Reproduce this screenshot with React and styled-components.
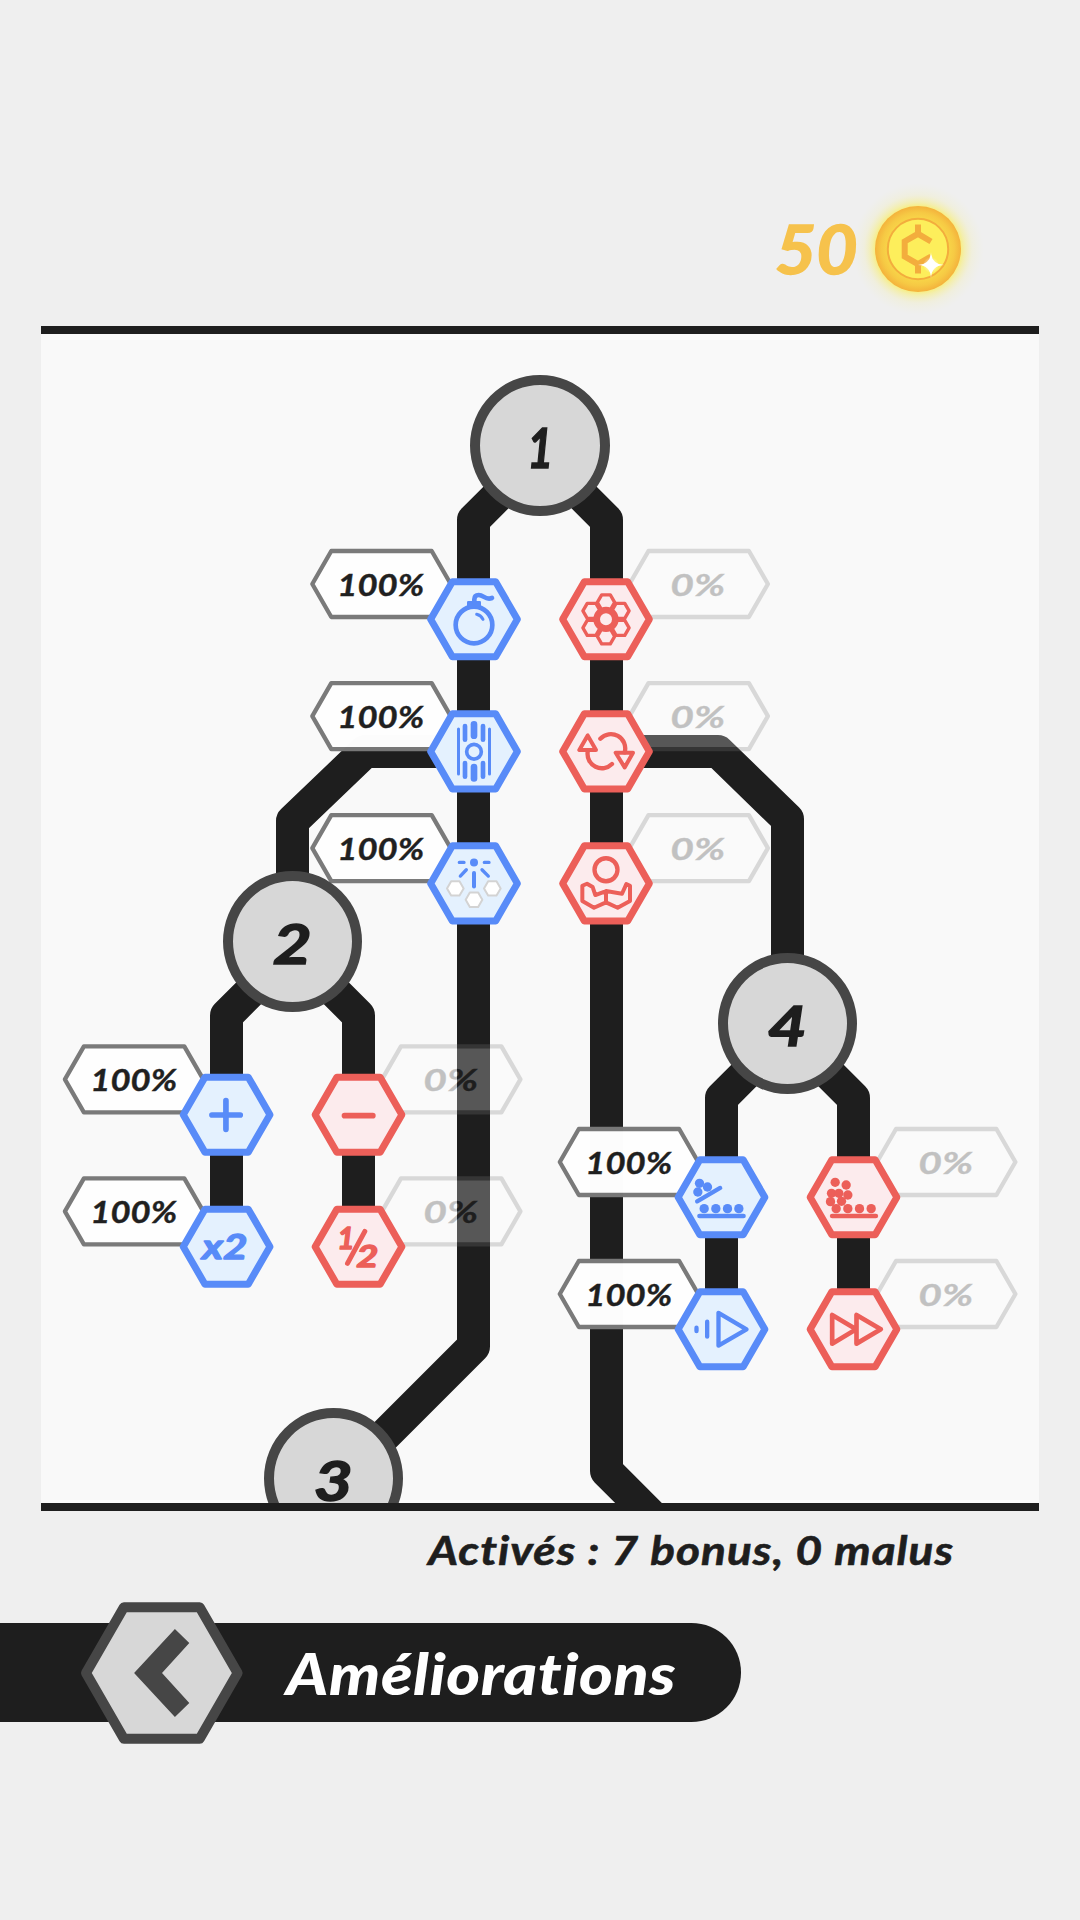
import React from "react";
import styled, { createGlobalStyle } from "styled-components";

const INK = "#1e1e1e";
const TONES = {
  bonus: { line: "#588bf8", fill: "#e4f1fe" },
  malus: { line: "#ec5f59", fill: "#fcebed" },
};

const GlobalStyle = createGlobalStyle`
  body { margin: 0; background: #efefef; }
  * { box-sizing: border-box; }
`;

const Screen = styled.main`
  width: 1080px;
  height: 1920px;
  display: flex;
  flex-direction: column;
  background: #efefef;
  color: ${INK};
  font-family: Lato, "Open Sans", sans-serif;
  font-style: italic;
  font-weight: 700;
  overflow: hidden;
`;

const Wallet = styled.header`
  height: 326px;
  padding: 179px 92px 0 0;
  display: flex;
  justify-content: flex-end;
  align-items: flex-start;
`;

const Amount = styled.span`
  height: 140px;
  line-height: 140px;
  font-size: 66px;
  color: #f6c24c;
  transform: scaleX(1.08);
  transform-origin: right;
  -webkit-text-stroke: 1.5px #f6c24c;
`;

const CoinArt = styled.svg`
  width: 140px;
  height: 140px;
  margin-left: -10px;
`;

const Board = styled.section`
  position: relative;
  flex: none;
  width: 998px;
  height: 1185px;
  margin: 0 41px;
  border: solid ${INK};
  border-width: 8px 0;
  background: #f9f9f9;
  overflow: hidden;
`;

const Canvas = styled.div`
  position: absolute;
  left: -41px;
  top: -334px;
  width: 1080px;
  height: 1920px;
`;

const Links = styled.svg`
  position: absolute;
  inset: 0;
  width: 1080px;
  height: 1920px;
  fill: none;
  stroke: ${INK};
  stroke-width: 33;
  stroke-linejoin: round;
`;

const Hub = styled.div`
  position: absolute;
  left: ${(p) => p.$left}px;
  top: ${(p) => p.$top}px;
  width: ${(p) => p.$width}px;
  height: 141px;
  display: flex;
  align-items: center;
  justify-content: center;
  border: 10px solid #464646;
  border-radius: 50%;
  background: #d7d7d7;
`;

const HubLabel = styled.span`
  font-size: 56px;
  line-height: 1;
  padding-top: 2px;
  transform: scaleX(${(p) => (p.$narrow ? 0.8 : 1.2)});
  -webkit-text-stroke: 1.5px ${INK};
`;

const Tile = styled.svg`
  position: absolute;
  left: ${(p) => p.$x - 48}px;
  top: ${(p) => p.$y - 43}px;
  width: 98px;
  height: 88px;
  stroke-linecap: round;
  stroke-linejoin: round;
`;

const IconText = styled.text`
  font: italic 700 ${(p) => p.$size}px Lato, sans-serif;
  fill: currentColor;
  stroke: currentColor;
  stroke-width: 4;
`;

const Badge = styled.div`
  position: absolute;
  left: ${(p) => p.$x - 72}px;
  top: ${(p) => p.$y - 36}px;
  width: 144px;
  height: 72px;
  display: grid;
  place-items: center;
  opacity: ${(p) => (p.$dim ? 0.25 : 0.99)};
`;

const BadgeShape = styled.svg`
  grid-area: 1 / 1;
  width: 144px;
  height: 72px;
  overflow: visible;
`;

const BadgeValue = styled.span`
  grid-area: 1 / 1;
  z-index: 1;
  font-size: 31px;
  line-height: 72px;
  white-space: nowrap;
  transform: scaleX(${(p) => (p.$short ? 1.32 : 1.12)});
  -webkit-text-stroke: 0.4px ${INK};
`;

const Summary = styled.p`
  margin: 0;
  height: 94px;
  padding: 14px 126px 0 0;
  text-align: right;
  font-size: 40px;
  line-height: 50px;
`;

const SummaryText = styled.span`
  display: inline-block;
  transform: scaleX(1.148);
  transform-origin: right;
  letter-spacing: 0.9px;
  -webkit-text-stroke: 0.6px ${INK};
`;

const Footer = styled.footer`
  height: 141px;
  margin-top: -3px;
  display: flex;
  align-items: center;
`;

const TitleBar = styled.div`
  width: 741px;
  height: 99px;
  display: flex;
  align-items: center;
  gap: 42px;
  padding-left: 79px;
  border-radius: 0 49.5px 49.5px 0;
  background: ${INK};
`;

const BackButton = styled.button`
  flex: none;
  width: 165px;
  height: 144px;
  padding: 0;
  border: 0;
  background: none;
`;

const Title = styled.h1`
  margin: 0;
  font-size: 57px;
  line-height: 70px;
  font-weight: 900;
  letter-spacing: 0.5px;
  color: #fff;
  transform: scaleX(1.132);
  transform-origin: left;
`;

const hex = (cx, cy, r) =>
  [0, 60, 120, 180, 240, 300]
    .map((a) => {
      const t = (a * Math.PI) / 180;
      return `${(cx + r * Math.cos(t)).toFixed(2)},${(cy + r * Math.sin(t)).toFixed(2)}`;
    })
    .join(" ");

/* Icons are drawn around 0,0 in thirds of a pixel. */
const stroke = (w) => ({ fill: "none", stroke: "currentColor", strokeWidth: w });
const Balls = ({ at }) =>
  at.map(([x, y]) => <circle key={`${x},${y}`} cx={x} cy={y} r="14" fill="currentColor" />);

const ICONS = {
  bomb: (
    <>
      <circle cy="17" r="55" {...stroke(14)} />
      <rect x="-21" y="-55" width="42" height="18" rx="4" fill="currentColor" />
      <path d="M1-52V-60Q1-73 14-73C30-73 34-56 54-64" {...stroke(14)} />
      <path d="M8-15Q21-12 27 0" {...stroke(9)} />
    </>
  ),
  comb: (
    <>
      {[30, 90, 150, 210, 270, 330].map((a) => {
        const t = (a * Math.PI) / 180;
        return <polygon key={a} points={hex(50 * Math.cos(t), 51 * Math.sin(t), 26)} {...stroke(10)} />;
      })}
      <circle r="28" fill="#fcebed" stroke="currentColor" strokeWidth="20" />
    </>
  ),
  beam: (
    <g fill="currentColor">
      <circle cy="1" r="22" {...stroke(11)} />
      <rect x="-10" y="-91" width="20" height="54" rx="10" />
      <rect x="-10" y="37" width="20" height="54" rx="10" />
      {[-34, 20].map((x) => (
        <g key={x}>
          <rect x={x} y="-83" width="14" height="55" rx="7" />
          <rect x={x} y="28" width="14" height="55" rx="7" />
        </g>
      ))}
      <rect x="-51" y="-72" width="9" height="144" rx="4.5" />
      <rect x="42" y="-72" width="9" height="144" rx="4.5" />
    </g>
  ),
  cycle: (
    <>
      <path d="M-55-48L-80-4H-30ZM29 4H81L56 48Z" {...stroke(12)} />
      <path d="M-17-38A43 43 0 0 1 56 3M-55 2A43 43 0 0 0 18 38" {...stroke(13)} />
    </>
  ),
  spark: (
    <>
      <circle cy="-63" r="12" fill="currentColor" />
      <path d="M-44-63H-30M31-63H45M-23-41L-41-22M24-41L43-22" {...stroke(10)} />
      <path d="M0-31V9" {...stroke(12)} />
      {[[-56, 15], [55, 15], [0, 49]].map(([x, y]) => (
        <polygon key={x} points={hex(x, y, 25)} fill="#fff" stroke="#d3d3d3" strokeWidth="6" />
      ))}
    </>
  ),
  hands: (
    <>
      <circle cy="-41" r="34.5" {...stroke(13)} />
      <path
        d="M-71 7L-57 1L-40 11L-32 35L0 23L48 31L61 2L72 7V53L35 73L0 57L-36 73L-71 53ZM0 23V57"
        {...stroke(12)}
      />
    </>
  ),
  plus: <path d="M-44 1H41M-2-42V44" {...stroke(17)} />,
  minus: <path d="M-42 3H43" {...stroke(17)} />,
  double: (
    <g transform="translate(-5 38) scale(1.22 1)">
      <IconText textAnchor="middle" $size={104}>
        x2
      </IconText>
    </g>
  ),
  half: (
    <>
      <IconText x="-64" y="8" $size={90}>
        1
      </IconText>
      <path d="M19-46L-33 50" {...stroke(15)} />
      <g transform="translate(-7 61) scale(1.25 1)">
        <IconText $size={92}>2</IconText>
      </g>
    </>
  ),
  sorted: (
    <>
      <Balls at={[[-66, -42], [-42, -31], [-71, -16], [-52, 34], [-17, 34], [18, 34], [52, 34]]} />
      <path d="M-73 12L-4-28" {...stroke(13)} />
      <path d="M-66 56H66" {...stroke(14)} />
    </>
  ),
  piled: (
    <>
      <Balls
        at={[[-55, -45], [-22, -37], [-66, -12], [-44, -12], [-17, -7], [-69, 13], [-36, 12], [-52, 34], [-17, 34], [18, 34], [53, 34]]}
      />
      <path d="M-64 56H67" {...stroke(14)} />
    </>
  ),
  slow: <path d="M-75-5V5M-43-23V22M-9-49V49L75 0Z" {...stroke(13)} />,
  fast: <path d="M-64-43V43L8 0ZM9-43V43L82 0Z" {...stroke(14)} />,
};

function Perk({ x, y, icon, malus }) {
  const tone = malus ? TONES.malus : TONES.bonus;
  const tx = Math.floor(x);
  const ty = Math.floor(y);
  const bx = x + (malus ? 92.7 : -92.5);
  const by = y - 35.3;
  const badgeX = Math.floor(bx);
  const badgeY = Math.floor(by);
  return (
    <>
      <Badge $x={badgeX} $y={badgeY} $dim={malus}>
        <BadgeShape viewBox={`${-72 - (bx - badgeX)} ${-36 - (by - badgeY)} 144 72`}>
          <polygon
            points="-69.2,0 -50.2,-33 50.2,-33 69.2,0 50.2,33 -50.2,33"
            fill="#fff"
            stroke="#797979"
            strokeWidth="4.3"
            strokeLinejoin="round"
          />
        </BadgeShape>
        <BadgeValue $short={malus}>{malus ? "0%" : "100%"}</BadgeValue>
      </Badge>
      <Tile
        $x={tx}
        $y={ty}
        viewBox={`${-144 - 3 * (x - tx)} ${-129 - 3 * (y - ty)} 294 264`}
        color={tone.line}
      >
        <polygon points={hex(0, 0, 130)} fill={tone.fill} stroke="currentColor" strokeWidth="21" />
        {ICONS[icon]}
      </Tile>
    </>
  );
}

const PERKS = [
  { x: 474, y: 619.3, icon: "bomb" },
  { x: 606, y: 619.3, icon: "comb", malus: true },
  { x: 474, y: 751.4, icon: "beam" },
  { x: 606, y: 751.4, icon: "cycle", malus: true },
  { x: 474, y: 883.4, icon: "spark" },
  { x: 606, y: 883.4, icon: "hands", malus: true },
  { x: 226.6, y: 1114.7, icon: "plus" },
  { x: 358.5, y: 1114.7, icon: "minus", malus: true },
  { x: 226.6, y: 1246.7, icon: "double" },
  { x: 358.5, y: 1246.7, icon: "half", malus: true },
  { x: 721.5, y: 1197.3, icon: "sorted" },
  { x: 853.5, y: 1197.3, icon: "piled", malus: true },
  { x: 721.5, y: 1329.3, icon: "slow" },
  { x: 853.5, y: 1329.3, icon: "fast", malus: true },
];

const HUBS = [
  { left: 470, top: 375, width: 140, label: "1" },
  { left: 223, top: 871, width: 139, label: "2" },
  { left: 264, top: 1408, width: 139, label: "3" },
  { left: 718, top: 953, width: 139, label: "4" },
];

function Coin() {
  return (
    <CoinArt viewBox="-70 -70 140 140">
      <defs>
        <radialGradient id="glow">
          <stop offset="0.6" stopColor="#fbee4a" stopOpacity="0.9" />
          <stop offset="0.7" stopColor="#f8ee6a" stopOpacity="0.5" />
          <stop offset="0.82" stopColor="#f4ee9a" stopOpacity="0.2" />
          <stop offset="1" stopColor="#efefc0" stopOpacity="0" />
        </radialGradient>
        <radialGradient id="rim">
          <stop offset="0.7" stopColor="#f8d548" />
          <stop offset="0.85" stopColor="#f6c944" />
          <stop offset="1" stopColor="#f4b23c" />
        </radialGradient>
        <radialGradient id="shine">
          <stop offset="0" stopColor="#fff" />
          <stop offset="1" stopColor="#fff" stopOpacity="0" />
        </radialGradient>
      </defs>
      <circle r="66" fill="url(#glow)" />
      <circle r="43" fill="url(#rim)" />
      <circle r="30.2" fill="#fdee5b" stroke="#f3ad3d" strokeWidth="2" />
      <path
        d="M0-24.5V-15M13-7.5L0-15.2L-13.3-7.5V7.5L0 15.2L13 7.5M0 15V24.5"
        fill="none"
        stroke="#f3ad3d"
        strokeWidth="6"
      />
      <circle cx="13" cy="16" r="8" fill="url(#shine)" />
      <path d="M13 3Q13.6 15.4 26 16Q13.6 16.6 13 29Q12.4 16.6 0 16Q12.4 15.4 13 3Z" fill="#fff" />
    </CoinArt>
  );
}

export default function App() {
  return (
    <Screen>
      <GlobalStyle />
      <Wallet>
        <Amount>50</Amount>
        <Coin />
      </Wallet>
      <Board>
        <Canvas>
          <Links viewBox="0 0 1080 1920">
            <path d="M540 453.5L473.5 520V1346.5L333.5 1486.5" />
            <path d="M540 453.5L606.5 520V1471L706.5 1571" />
            <path d="M473.5 751.5H365L292.5 821V941" />
            <path d="M606.5 751.5H718L787.5 819V1023" />
            <path d="M226.5 1246V1015.5L292.5 949.5L358.5 1015.5V1246" />
            <path d="M721.5 1329V1098L787.5 1032L853.5 1098V1329" />
          </Links>
          {PERKS.map((p) => (
            <Perk key={p.icon} {...p} />
          ))}
          {HUBS.map((h) => (
            <Hub key={h.label} $left={h.left} $top={h.top} $width={h.width}>
              <HubLabel $narrow={h.label === "1"}>{h.label}</HubLabel>
            </Hub>
          ))}
        </Canvas>
      </Board>
      <Summary>
        <SummaryText>Activés : 7 bonus, 0 malus</SummaryText>
      </Summary>
      <Footer>
        <TitleBar>
          <BackButton aria-label="Retour">
            <svg width="165" height="144" viewBox="-82.5 -72 165 144">
              <polygon
                points={hex(0.3, 0, 75.8)}
                fill="#d7d7d7"
                stroke="#464646"
                strokeWidth="10"
                strokeLinejoin="round"
              />
              <path d="M13.4-44L27.8-30L.5 0L27.8 30L13.4 44L-27.4 0Z" fill="#464646" />
            </svg>
          </BackButton>
          <Title>Améliorations</Title>
        </TitleBar>
      </Footer>
    </Screen>
  );
}
